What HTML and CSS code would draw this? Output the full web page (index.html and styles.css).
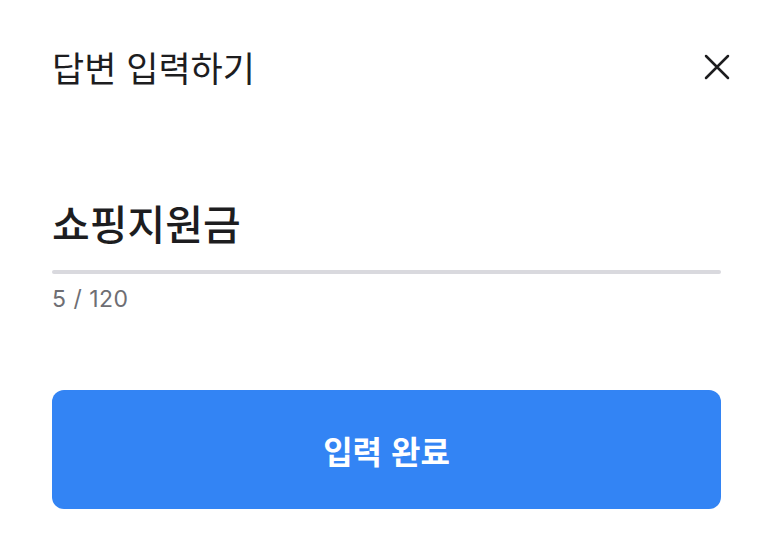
FILE: index.html
```html
<!DOCTYPE html>
<html lang="ko">
<head>
<meta charset="utf-8">
<link rel="stylesheet" href="styles.css">
</head>
<body>
<div class="sheet">
  <header class="head">
    <h1 class="title">답변 입력하기</h1>
    <button class="close" aria-label="닫기">
      <svg width="26" height="26" viewBox="0 0 26 26"><path d="M2 2 L24 24 M24 2 L2 24" stroke="#1d1d1f" stroke-width="2.5" stroke-linecap="round" fill="none"/></svg>
    </button>
  </header>
  <div class="field">
    <div class="value">쇼핑지원금</div>
    <div class="line"></div>
    <div class="count">5 / 120</div>
  </div>
  <button class="submit">입력 완료</button>
</div>
</body>
</html>
```
FILE: styles.css
```css
html, body {
  margin: 0;
  padding: 0;
  background: #ffffff;
}
body {
  font-family: "Noto Sans CJK KR", "Noto Sans", sans-serif;
  color: #1d1d1f;
}
.sheet {
  padding: 0 52px;
  display: flex;
  flex-direction: column;
}
.head {
  display: flex;
  justify-content: space-between;
  align-items: center;
  height: 72px;
  margin-top: 30px;
}
.title {
  margin: 0;
  font-size: 35px;
  font-weight: 400;
  line-height: 1;
  letter-spacing: 0;
}
.close {
  border: 0;
  background: none;
  padding: 0;
  margin-right: -9px;
  margin-top: 1px;
  width: 26px;
  height: 26px;
  display: flex;
}
.field {
  margin-top: 100px;
  display: flex;
  flex-direction: column;
}
.value {
  font-size: 41px;
  line-height: 1;
  font-weight: 500;
  color: #1d1d1f;
}
.line {
  height: 4px;
  background: #d9d9de;
  border-radius: 2px;
  margin-top: 27px;
}
.count {
  margin-top: 14px;
  font-family: "Inter", "Noto Sans", sans-serif;
  font-size: 23px;
  line-height: 1;
  letter-spacing: 0.5px;
  color: #6e6e73;
}
.submit {
  margin-top: 79px;
  height: 119px;
  border: 0;
  border-radius: 12px;
  background: #3384f4;
  color: #ffffff;
  font-family: "Noto Sans CJK KR", sans-serif;
  font-size: 32px;
  font-weight: 700;
}
```
